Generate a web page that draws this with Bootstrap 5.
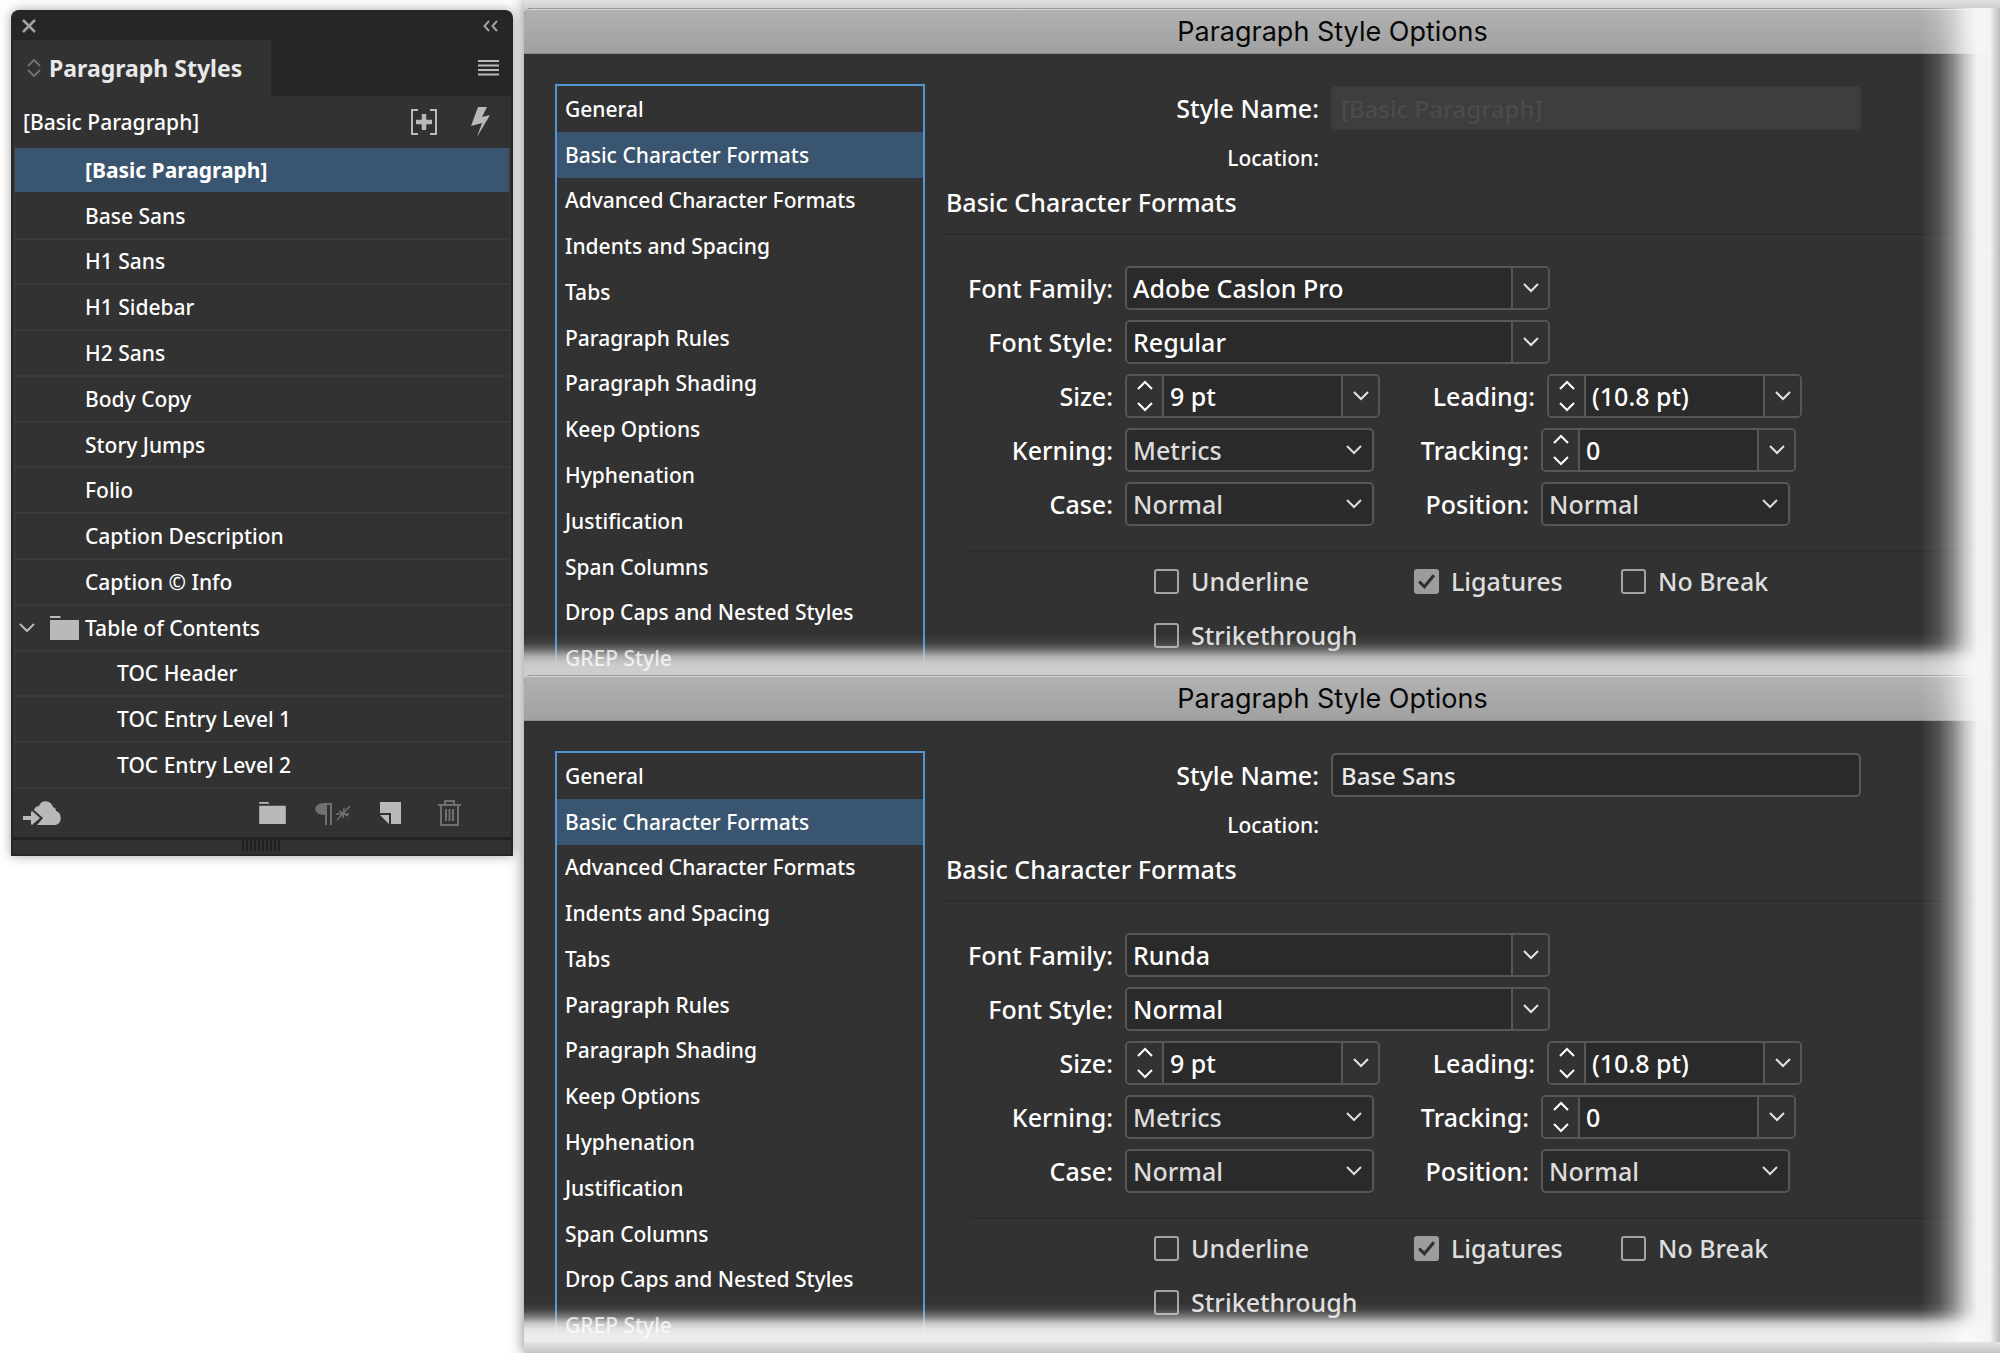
<!DOCTYPE html>
<html lang="en">
<head>
<meta charset="utf-8">
<meta name="viewport" content="width=device-width, initial-scale=1">
<title>Paragraph Styles</title>
<link rel="stylesheet" href="https://cdn.jsdelivr.net/npm/bootstrap@5.3.0/dist/css/bootstrap.min.css">
<style>
:root { --panel: #323232; --well: #2a2a2a; --line: #575757; --sel: #3a556f; --icon: #b9b9b9; }
body { background: #fff; color: #fff; font-family: "Noto Sans", "Open Sans", sans-serif; font-size: 21px; line-height: 28px; font-weight: 500; overflow-x: hidden; }
button { background: none; border: 0; padding: 0; color: var(--icon); }
button svg, .tree-icon { display: block; fill: none; stroke: currentColor; }
svg .solid { fill: currentColor; stroke: none; }

/* styles panel */
.styles-panel { width: 502px; margin: 10px 11px 0 11px; background: var(--panel); border-radius: 8px 8px 0 0; box-shadow: 0 0 12px rgba(0,0,0,.35); border: 2px solid #272727; border-top: 0; }
.panel-top { height: 30px; background: #262626; border-radius: 8px 8px 0 0; padding: 2px 13px 0 9px; }
.panel-top button { color: #a2a2a2; }
.panel-tabs { height: 56px; background: #262626; padding-right: 12px; }
.panel-tab { width: 258px; background: var(--panel); padding-left: 14px; font-size: 23px; color: #e8e8e8; font-weight: 700; }
.current-row { height: 52px; padding: 0 20px 0 10px; gap: 34px; }
.style-tree { height: 641px; margin: 0 1px; border: solid #3c3c3c; border-width: 0 1px; }
.style-tree li { border-bottom: 2px solid #3b3b3b; padding-left: 70px; }
.style-tree li.active { background: var(--sel); font-weight: 700; border-color: var(--panel); }
.style-tree li.child { padding-left: 102px; }
.style-tree li.group { padding-left: 3px; }
.group .tree-icon { color: var(--icon); margin: 0 6px 0 14px; }
.panel-foot { height: 48px; padding: 0 50px 0 10px; }
.foot-tools { gap: 29px; }
.panel-grip { height: 17px; border-top: 3px solid #222; }
.dim { color: #707070; }

/* dialogs */
.dialogs { background: linear-gradient(#e2e2e2, #cfcfcf 8px, #cfcfcf 1330px, #eee 1338px, #c6c6c6 1353px); padding: 8px 0 11px; box-shadow: 0 0 14px rgba(0,0,0,.5); min-width: 0; }
.opt-dialog { background: var(--panel); position: relative; border-radius: 7px 0 0 0; overflow: hidden; --fade: 205,205,205; }
.opt-dialog.last { --fade: 236,236,236; }
.opt-dialog::before { content: ""; position: absolute; z-index: 2; inset: auto 0 0 0; height: 40px; background: linear-gradient(rgba(var(--fade),0), rgba(var(--fade),.1) 8px, rgba(var(--fade),.4) 15px, rgba(var(--fade),.78) 21px, rgba(var(--fade),.95) 27px, rgb(var(--fade)) 33px); pointer-events: none; }
.opt-dialog::after { content: ""; position: absolute; z-index: 3; inset: 0 0 0 auto; width: 80px; background: linear-gradient(90deg, rgba(255,255,255,0), rgba(255,255,255,.16) 19px, rgba(255,255,255,.42) 33px, rgba(255,255,255,.72) 45px, rgba(248,248,248,.97) 57px, #f3f3f3 70px, #bbb); pointer-events: none; }
.opt-title { height: 46px; background: linear-gradient(#b2b2b2, #a0a0a0); border-top: 1px solid #9a9a9a; box-shadow: inset 0 1px #d8d8d8, inset 0 -1px #8c8c8c; color: #080808; font: 400 27px/46px Inter, sans-serif; padding-left: 141px; margin: 0; text-align: center; }
.opt-body { padding: 30px 0 0 31px; gap: 19px; }
.cat-box { width: 370px; flex: none; max-height: 591px; overflow: hidden; border: 2px solid #5594d2; border-bottom: 0; }
.cat-list { height: 595px; }
.cat-list a { color: #fff; text-decoration: none; padding-left: 8px; }
.cat-list a.active { background: var(--sel); }
.cat-list a:last-child { position: relative; z-index: 3; color: rgba(255,255,255,.75); }
.opt-form { font-size: 25px; line-height: 32px; padding-top: 2px; }
.name-label { width: 375px; text-align: right; }
.opt-form .form-control, .opt-form .form-select { font: inherit; color: #fff; background-color: var(--well); border: 2px solid var(--line); height: 44px; padding: 0 6px; border-radius: 5px; }
.opt-form .name-input { width: 530px; flex: none; font-size: 24px; padding-left: 8px; color: #e8e8e8; }
.opt-form .name-input:disabled { background: #3e3e3e; border-color: #3c3c3c; color: #4b4b4b; }
.loc-row { font-size: 21px; height: 56px; }
.opt-heading { font-size: 25px; line-height: 32px; font-weight: 500; margin: 0 0 15px 2px; }
.opt-rule { border-top: 2px solid #2d2d2d; }
.opt-fields { padding-top: 31px; gap: 10px; }
.opt-fields label.side-a { width: 169px; text-align: right; }
.opt-fields label.side-b { width: 155px; text-align: right; }
.opt-field { gap: 12px; }
.combo { border: 2px solid var(--line); border-radius: 5px; background: var(--well); height: 44px; width: 255px; overflow: hidden; }
.combo.wide { width: 425px; }
.combo .form-control { border: 0; border-radius: 0; height: 40px; min-width: 0; }
.combo .drop, .combo .spin { width: 37px; flex: none; background: var(--panel); color: #e4e4e4; }
.combo .drop { border-left: 2px solid var(--line); }
.combo .spin { border-right: 2px solid var(--line); }
.opt-form .form-select { width: 249px; flex: none; color: #dcdcdc; background-image: url("data:image/svg+xml,%3Csvg xmlns='http://www.w3.org/2000/svg' viewBox='0 0 16 10'%3E%3Cpath d='M1 1l7 7 7-7' fill='none' stroke='%23ddd' stroke-width='2'/%3E%3C/svg%3E"); background-size: 16px 10px; background-position: right 10px center; }
.opt-checks { margin-left: 25px; padding: 11px 0 0 185px; color: #dedede; row-gap: 18px; }
.opt-check { gap: 12px; height: 36px; }
.opt-check.first { width: 260px; }
.opt-check.second { width: 207px; }
.opt-check .form-check-input { width: 25px; height: 25px; margin: 0; background-color: transparent; border: 2px solid #a4a4a4; border-radius: 3px; }
.opt-check .form-check-input:checked { background-color: #9c9c9c; border-color: #9c9c9c; background-image: url("data:image/svg+xml,%3Csvg xmlns='http://www.w3.org/2000/svg' viewBox='0 0 20 20'%3E%3Cpath d='M3 10l5 5 9-11' fill='none' stroke='%23303030' stroke-width='3'/%3E%3C/svg%3E"); }
</style>
<script src="https://cdn.jsdelivr.net/npm/bootstrap@5.3.0/dist/js/bootstrap.bundle.min.js"></script>
</head>
<body>
<svg class="d-none" aria-hidden="true">
  <symbol id="down" viewBox="0 0 16 10"><path d="M1 1l7 7 7-7" fill="none" stroke="currentColor" stroke-width="2"/></symbol>
  <symbol id="up" viewBox="0 0 16 10"><path d="M1 9l7-7 7 7" fill="none" stroke="currentColor" stroke-width="2"/></symbol>
  <symbol id="folder" viewBox="0 0 29 24"><path d="M0 0h10l1 2H0zM0 4h29v20H0z" fill="currentColor" stroke="none"/></symbol>
</svg>
<div class="d-flex align-items-start">
  <aside class="styles-panel flex-shrink-0">
    <div class="panel-top d-flex justify-content-between align-items-center">
      <button type="button" aria-label="Close"><svg width="14" height="14" viewBox="0 0 14 14" stroke-width="2.5"><path d="M1 1l12 12M13 1L1 13"/></svg></button>
      <button type="button" aria-label="Collapse"><svg width="15" height="12" viewBox="0 0 15 12" stroke-width="2"><path d="M6 1L1.500 6 6 11M14 1L9.500 6l4.500 5"/></svg></button>
    </div>
    <div class="panel-tabs d-flex justify-content-between align-items-center">
      <div class="panel-tab d-flex align-items-center h-100 gap-2">
        <svg class="tree-icon dim" width="14" height="18" viewBox="0 0 14 18" stroke-width="2"><path d="M1 7l6-6 6 6M1 11l6 6 6-6"/></svg>
        <span>Paragraph Styles</span>
      </div>
      <button type="button" aria-label="Panel menu"><svg width="21" height="16" viewBox="0 0 21 16" stroke-width="2"><path d="M0 1h21M0 5.500h21M0 10h21M0 14.500h21"/></svg></button>
    </div>
    <div class="current-row d-flex align-items-center">
      <span class="me-auto">[Basic Paragraph]</span>
      <button type="button" aria-label="Style override highlighter"><svg width="26" height="26" viewBox="0 0 26 26" stroke-width="2"><path d="M7 1H1v24h6M19 1h6v24h-6"/><path d="M13 5v16M5 13h16" stroke-width="4.500"/></svg></button>
      <button type="button" aria-label="Clear overrides"><svg width="20" height="30" viewBox="0 0 20 30"><path class="solid" d="M7 0h9l-5 10 8-2L6 30l5-14-11 3z"/></svg></button>
    </div>
    <ul class="style-tree list-unstyled d-flex flex-column mb-0">
      <li class="active flex-fill d-flex align-items-center">[Basic Paragraph]</li>
      <li class="flex-fill d-flex align-items-center">Base Sans</li>
      <li class="flex-fill d-flex align-items-center">H1 Sans</li>
      <li class="flex-fill d-flex align-items-center">H1 Sidebar</li>
      <li class="flex-fill d-flex align-items-center">H2 Sans</li>
      <li class="flex-fill d-flex align-items-center">Body Copy</li>
      <li class="flex-fill d-flex align-items-center">Story Jumps</li>
      <li class="flex-fill d-flex align-items-center">Folio</li>
      <li class="flex-fill d-flex align-items-center">Caption Description</li>
      <li class="flex-fill d-flex align-items-center">Caption © Info</li>
      <li class="group flex-fill d-flex align-items-center">
        <button type="button" aria-label="Collapse group"><svg width="18" height="10"><use href="#down"/></svg></button>
        <svg class="tree-icon" width="29" height="24"><use href="#folder"/></svg>
        <span>Table of Contents</span>
      </li>
      <li class="child flex-fill d-flex align-items-center">TOC Header</li>
      <li class="child flex-fill d-flex align-items-center">TOC Entry Level 1</li>
      <li class="child flex-fill d-flex align-items-center">TOC Entry Level 2</li>
    </ul>
    <div class="panel-foot d-flex align-items-center justify-content-between">
      <button type="button" aria-label="Sync from library"><svg width="38" height="24" viewBox="0 0 38 24"><path class="solid" d="M14 24l6-7-9-8c1-3 3-4 5-4 2-7 12-6 14 1 3 1 3 3 3 4 7 2 6 14-1 14z"/><path class="solid" d="M0 15h8v-4l1-1 8 7-8 7-1-1v-4H0z"/></svg></button>
      <div class="d-flex align-items-center foot-tools">
        <button type="button" aria-label="New group"><svg width="27" height="22"><use href="#folder"/></svg></button>
        <button type="button" class="dim" aria-label="Clear overrides in selection"><svg width="36" height="24" viewBox="0 0 36 24" stroke-width="2"><path d="M9 3h7v21M11 3v21"/><path class="solid" d="M10 2C-3 2-3 14 10 14z"/><path d="M22 19L35 5M24 10l9 5M29 7l-1 10M21 13h13" stroke-width="1.500"/></svg></button>
        <button type="button" aria-label="New style"><svg width="21" height="22" viewBox="0 0 21 22"><path class="solid" d="M0 0h21v22H11V11H0zM0 13h9v9z"/></svg></button>
        <button type="button" class="dim ms-2" aria-label="Delete style"><svg width="23" height="26" viewBox="0 0 23 26" stroke-width="2"><path d="M0 5h23M7 5V1h9v4M3 5v20h17V5M8 9v12M11.500 9v12M15 9v12"/></svg></button>
      </div>
    </div>
    <div class="panel-grip d-flex justify-content-center">
      <svg width="40" height="11" stroke="#1f1f1f" stroke-width="2"><path d="M1 0v11M5 0v11M9 0v11M13 0v11M17 0v11M21 0v11M25 0v11M29 0v11M33 0v11M37 0v11"/></svg>
    </div>
  </aside>

  <main class="dialogs flex-grow-1">
    <section class="opt-dialog">
      <h1 class="opt-title">Paragraph Style Options</h1>
      <div class="opt-body d-flex">
        <nav class="cat-box">
          <div class="cat-list d-flex flex-column">
            <a href="#" class="flex-fill d-flex align-items-center">General</a>
            <a href="#" class="active flex-fill d-flex align-items-center">Basic Character Formats</a>
            <a href="#" class="flex-fill d-flex align-items-center">Advanced Character Formats</a>
            <a href="#" class="flex-fill d-flex align-items-center">Indents and Spacing</a>
            <a href="#" class="flex-fill d-flex align-items-center">Tabs</a>
            <a href="#" class="flex-fill d-flex align-items-center">Paragraph Rules</a>
            <a href="#" class="flex-fill d-flex align-items-center">Paragraph Shading</a>
            <a href="#" class="flex-fill d-flex align-items-center">Keep Options</a>
            <a href="#" class="flex-fill d-flex align-items-center">Hyphenation</a>
            <a href="#" class="flex-fill d-flex align-items-center">Justification</a>
            <a href="#" class="flex-fill d-flex align-items-center">Span Columns</a>
            <a href="#" class="flex-fill d-flex align-items-center">Drop Caps and Nested Styles</a>
            <a href="#" class="flex-fill d-flex align-items-center">GREP Style</a>
          </div>
        </nav>
        <form class="opt-form flex-grow-1">
          <div class="opt-field d-flex align-items-center">
            <label class="name-label" for="name-a">Style Name:</label>
            <input class="form-control name-input" id="name-a" type="text" value="[Basic Paragraph]" disabled>
          </div>
          <div class="loc-row d-flex align-items-center"><span class="name-label">Location:</span></div>
          <h2 class="opt-heading">Basic Character Formats</h2>
          <div class="opt-rule"></div>
          <div class="opt-fields d-flex flex-column">
            <div class="opt-field d-flex align-items-center">
              <label class="side-a" for="family-a">Font Family:</label>
              <div class="combo wide d-flex"><input class="form-control" id="family-a" type="text" value="Adobe Caslon Pro"><button class="drop d-flex align-items-center justify-content-center" type="button" aria-label="Choose font family"><svg width="16" height="10"><use href="#down"/></svg></button></div>
            </div>
            <div class="opt-field d-flex align-items-center">
              <label class="side-a" for="face-a">Font Style:</label>
              <div class="combo wide d-flex"><input class="form-control" id="face-a" type="text" value="Regular"><button class="drop d-flex align-items-center justify-content-center" type="button" aria-label="Choose font style"><svg width="16" height="10"><use href="#down"/></svg></button></div>
            </div>
            <div class="d-flex">
              <div class="opt-field d-flex align-items-center">
                <label class="side-a" for="size-a">Size:</label>
                <div class="combo d-flex"><div class="spin d-flex flex-column align-items-center justify-content-between py-1"><button type="button" class="text-white" aria-label="Increase size"><svg width="16" height="10"><use href="#up"/></svg></button><button type="button" class="text-white" aria-label="Decrease size"><svg width="16" height="10"><use href="#down"/></svg></button></div><input class="form-control" id="size-a" type="text" value="9 pt"><button class="drop d-flex align-items-center justify-content-center" type="button" aria-label="Choose size"><svg width="16" height="10"><use href="#down"/></svg></button></div>
              </div>
              <div class="opt-field d-flex align-items-center">
                <label class="side-b" for="lead-a">Leading:</label>
                <div class="combo d-flex"><div class="spin d-flex flex-column align-items-center justify-content-between py-1"><button type="button" class="text-white" aria-label="Increase leading"><svg width="16" height="10"><use href="#up"/></svg></button><button type="button" class="text-white" aria-label="Decrease leading"><svg width="16" height="10"><use href="#down"/></svg></button></div><input class="form-control" id="lead-a" type="text" value="(10.8 pt)"><button class="drop d-flex align-items-center justify-content-center" type="button" aria-label="Choose leading"><svg width="16" height="10"><use href="#down"/></svg></button></div>
              </div>
            </div>
            <div class="d-flex">
              <div class="opt-field d-flex align-items-center">
                <label class="side-a" for="kern-a">Kerning:</label>
                <select class="form-select" id="kern-a"><option>Metrics</option></select>
              </div>
              <div class="opt-field d-flex align-items-center">
                <label class="side-b" for="track-a">Tracking:</label>
                <div class="combo d-flex"><div class="spin d-flex flex-column align-items-center justify-content-between py-1"><button type="button" class="text-white" aria-label="Increase tracking"><svg width="16" height="10"><use href="#up"/></svg></button><button type="button" class="text-white" aria-label="Decrease tracking"><svg width="16" height="10"><use href="#down"/></svg></button></div><input class="form-control" id="track-a" type="text" value="0"><button class="drop d-flex align-items-center justify-content-center" type="button" aria-label="Choose tracking"><svg width="16" height="10"><use href="#down"/></svg></button></div>
              </div>
            </div>
            <div class="d-flex">
              <div class="opt-field d-flex align-items-center">
                <label class="side-a" for="case-a">Case:</label>
                <select class="form-select" id="case-a"><option>Normal</option></select>
              </div>
              <div class="opt-field d-flex align-items-center">
                <label class="side-b" for="pos-a">Position:</label>
                <select class="form-select" id="pos-a"><option>Normal</option></select>
              </div>
            </div>
          </div>
          <div class="opt-rule mt-4 opt-checks d-flex flex-column">
            <div class="d-flex">
              <div class="opt-check first d-flex align-items-center"><input class="form-check-input" type="checkbox" id="under-a"><label for="under-a">Underline</label></div>
              <div class="opt-check second d-flex align-items-center"><input class="form-check-input" type="checkbox" id="liga-a" checked><label for="liga-a">Ligatures</label></div>
              <div class="opt-check d-flex align-items-center"><input class="form-check-input" type="checkbox" id="nobr-a"><label for="nobr-a">No Break</label></div>
            </div>
            <div class="opt-check d-flex align-items-center"><input class="form-check-input" type="checkbox" id="strike-a"><label for="strike-a">Strikethrough</label></div>
          </div>
        </form>
      </div>
    </section>

    <section class="opt-dialog last">
      <h1 class="opt-title">Paragraph Style Options</h1>
      <div class="opt-body d-flex">
        <nav class="cat-box">
          <div class="cat-list d-flex flex-column">
            <a href="#" class="flex-fill d-flex align-items-center">General</a>
            <a href="#" class="active flex-fill d-flex align-items-center">Basic Character Formats</a>
            <a href="#" class="flex-fill d-flex align-items-center">Advanced Character Formats</a>
            <a href="#" class="flex-fill d-flex align-items-center">Indents and Spacing</a>
            <a href="#" class="flex-fill d-flex align-items-center">Tabs</a>
            <a href="#" class="flex-fill d-flex align-items-center">Paragraph Rules</a>
            <a href="#" class="flex-fill d-flex align-items-center">Paragraph Shading</a>
            <a href="#" class="flex-fill d-flex align-items-center">Keep Options</a>
            <a href="#" class="flex-fill d-flex align-items-center">Hyphenation</a>
            <a href="#" class="flex-fill d-flex align-items-center">Justification</a>
            <a href="#" class="flex-fill d-flex align-items-center">Span Columns</a>
            <a href="#" class="flex-fill d-flex align-items-center">Drop Caps and Nested Styles</a>
            <a href="#" class="flex-fill d-flex align-items-center">GREP Style</a>
          </div>
        </nav>
        <form class="opt-form flex-grow-1">
          <div class="opt-field d-flex align-items-center">
            <label class="name-label" for="name-b">Style Name:</label>
            <input class="form-control name-input" id="name-b" type="text" value="Base Sans">
          </div>
          <div class="loc-row d-flex align-items-center"><span class="name-label">Location:</span></div>
          <h2 class="opt-heading">Basic Character Formats</h2>
          <div class="opt-rule"></div>
          <div class="opt-fields d-flex flex-column">
            <div class="opt-field d-flex align-items-center">
              <label class="side-a" for="family-b">Font Family:</label>
              <div class="combo wide d-flex"><input class="form-control" id="family-b" type="text" value="Runda"><button class="drop d-flex align-items-center justify-content-center" type="button" aria-label="Choose font family"><svg width="16" height="10"><use href="#down"/></svg></button></div>
            </div>
            <div class="opt-field d-flex align-items-center">
              <label class="side-a" for="face-b">Font Style:</label>
              <div class="combo wide d-flex"><input class="form-control" id="face-b" type="text" value="Normal"><button class="drop d-flex align-items-center justify-content-center" type="button" aria-label="Choose font style"><svg width="16" height="10"><use href="#down"/></svg></button></div>
            </div>
            <div class="d-flex">
              <div class="opt-field d-flex align-items-center">
                <label class="side-a" for="size-b">Size:</label>
                <div class="combo d-flex"><div class="spin d-flex flex-column align-items-center justify-content-between py-1"><button type="button" class="text-white" aria-label="Increase size"><svg width="16" height="10"><use href="#up"/></svg></button><button type="button" class="text-white" aria-label="Decrease size"><svg width="16" height="10"><use href="#down"/></svg></button></div><input class="form-control" id="size-b" type="text" value="9 pt"><button class="drop d-flex align-items-center justify-content-center" type="button" aria-label="Choose size"><svg width="16" height="10"><use href="#down"/></svg></button></div>
              </div>
              <div class="opt-field d-flex align-items-center">
                <label class="side-b" for="lead-b">Leading:</label>
                <div class="combo d-flex"><div class="spin d-flex flex-column align-items-center justify-content-between py-1"><button type="button" class="text-white" aria-label="Increase leading"><svg width="16" height="10"><use href="#up"/></svg></button><button type="button" class="text-white" aria-label="Decrease leading"><svg width="16" height="10"><use href="#down"/></svg></button></div><input class="form-control" id="lead-b" type="text" value="(10.8 pt)"><button class="drop d-flex align-items-center justify-content-center" type="button" aria-label="Choose leading"><svg width="16" height="10"><use href="#down"/></svg></button></div>
              </div>
            </div>
            <div class="d-flex">
              <div class="opt-field d-flex align-items-center">
                <label class="side-a" for="kern-b">Kerning:</label>
                <select class="form-select" id="kern-b"><option>Metrics</option></select>
              </div>
              <div class="opt-field d-flex align-items-center">
                <label class="side-b" for="track-b">Tracking:</label>
                <div class="combo d-flex"><div class="spin d-flex flex-column align-items-center justify-content-between py-1"><button type="button" class="text-white" aria-label="Increase tracking"><svg width="16" height="10"><use href="#up"/></svg></button><button type="button" class="text-white" aria-label="Decrease tracking"><svg width="16" height="10"><use href="#down"/></svg></button></div><input class="form-control" id="track-b" type="text" value="0"><button class="drop d-flex align-items-center justify-content-center" type="button" aria-label="Choose tracking"><svg width="16" height="10"><use href="#down"/></svg></button></div>
              </div>
            </div>
            <div class="d-flex">
              <div class="opt-field d-flex align-items-center">
                <label class="side-a" for="case-b">Case:</label>
                <select class="form-select" id="case-b"><option>Normal</option></select>
              </div>
              <div class="opt-field d-flex align-items-center">
                <label class="side-b" for="pos-b">Position:</label>
                <select class="form-select" id="pos-b"><option>Normal</option></select>
              </div>
            </div>
          </div>
          <div class="opt-rule mt-4 opt-checks d-flex flex-column">
            <div class="d-flex">
              <div class="opt-check first d-flex align-items-center"><input class="form-check-input" type="checkbox" id="under-b"><label for="under-b">Underline</label></div>
              <div class="opt-check second d-flex align-items-center"><input class="form-check-input" type="checkbox" id="liga-b" checked><label for="liga-b">Ligatures</label></div>
              <div class="opt-check d-flex align-items-center"><input class="form-check-input" type="checkbox" id="nobr-b"><label for="nobr-b">No Break</label></div>
            </div>
            <div class="opt-check d-flex align-items-center"><input class="form-check-input" type="checkbox" id="strike-b"><label for="strike-b">Strikethrough</label></div>
          </div>
        </form>
      </div>
    </section>
  </main>
</div>
</body>
</html>
